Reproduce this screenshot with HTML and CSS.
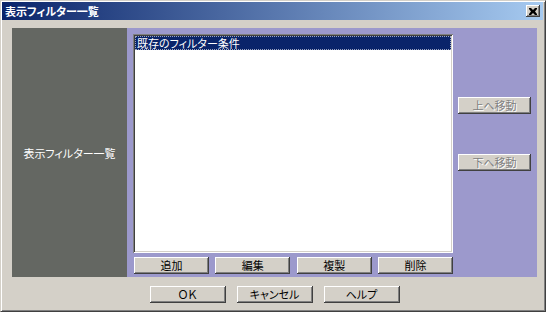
FILE: index.html
```html
<!DOCTYPE html>
<html lang="ja">
<head>
<meta charset="utf-8">
<link rel="stylesheet" href="styles.css">
</head>
<body>
<div class="window">
  <div class="titlebar">
    <span class="title">表示フィルター一覧</span>
    <span class="close"><svg width="8" height="7" viewBox="0 0 8 7"><path d="M0 0h2l2 2 2-2h2v1L6 3.5 8 6v1H6L4 5 2 7H0V6l2-2.5L0 1z" fill="#000"/></svg></span>
  </div>
  <div class="content">
    <div class="panel">
      <div class="side"><span>表示フィルター一覧</span></div>
      <div class="main">
        <div class="listcol">
          <div class="listbox">
            <div class="item selected">既存のフィルター条件</div>
          </div>
          <div class="listbtns">
            <button class="btn">追加</button>
            <button class="btn">編集</button>
            <button class="btn">複製</button>
            <button class="btn">削除</button>
          </div>
        </div>
        <div class="movecol">
          <button class="btn move disabled">上へ移動</button>
          <button class="btn move disabled">下へ移動</button>
        </div>
      </div>
    </div>
    <div class="footer">
      <button class="btn foot">ＯＫ</button>
      <button class="btn foot">キャンセル</button>
      <button class="btn foot">ヘルプ</button>
    </div>
  </div>
</div>
</body>
</html>
```
FILE: styles.css
```css
* { box-sizing: border-box; }
html, body { margin: 0; padding: 0; background: #ffffff; }
body {
  font-family: "Noto Sans CJK JP", "Noto Sans", sans-serif;
  font-size: 11px;
  font-feature-settings: "palt";
  width: 549px;
  height: 316px;
  overflow: hidden;
}
.window {
  width: 546px;
  height: 312px;
  background: #d4d0c8;
  border: 1px solid;
  border-color: #d4d0c8 #404040 #404040 #d4d0c8;
  box-shadow: inset 1px 1px #ffffff, inset -1px -1px #808080;
  padding: 1px 2px 2px 1px;
  display: flex;
  flex-direction: column;
}
.titlebar {
  height: 18px;
  background: linear-gradient(to right, #0a246a, #a6caf0);
  display: flex;
  align-items: center;
  justify-content: space-between;
  padding: 0 3px 0 3px;
}
.title {
  color: #ffffff;
  font-weight: bold;
  font-size: 11px;
  line-height: 18px;
}
.close {
  width: 14px;
  height: 12px;
  background: #d4d0c8;
  box-shadow: inset -1px -1px #404040, inset 1px 1px #ffffff, inset -2px -2px #808080;
  display: flex;
  align-items: center;
  justify-content: center;
}
.close svg { display: block; }
.content {
  flex: 1;
  padding: 8px 6px 0 10px;
  display: flex;
  flex-direction: column;
}
.panel {
  height: 249px;
  display: flex;
}
.side {
  width: 115px;
  background: #646762;
  color: #ffffff;
  display: flex;
  align-items: center;
  justify-content: center;
}
.main {
  flex: 1;
  background: #9c99cc;
  display: flex;
  padding: 6px 6px 3px 6px;
  gap: 5px;
}
.listcol {
  width: 320px;
  display: flex;
  flex-direction: column;
  gap: 4px;
}
.listbox {
  height: 220px;
  background: #ffffff;
  box-shadow: inset 1px 1px #808080, inset -1px -1px #ffffff, inset 2px 2px #404040, inset -2px -2px #d4d0c8;
  padding: 2px;
}
.item {
  height: 14px;
  line-height: 14px;
  padding-left: 2px;
}
.item.selected {
  background: #0a246a;
  color: #ffffff;
  outline: 1px dotted #9aa3c0;
  outline-offset: -1px;
}
.listbtns {
  display: flex;
  justify-content: space-between;
  padding-left: 1px;
}
.btn {
  font-family: inherit;
  font-size: 11px;
  font-feature-settings: "palt";
  background: #d4d0c8;
  color: #000000;
  border: none;
  margin: 0;
  padding: 0;
  height: 17px;
  line-height: 17px;
  box-shadow: inset -1px -1px #404040, inset 1px 1px #ffffff, inset -2px -2px #808080;
}
.listbtns .btn { width: 75px; }
.movecol {
  width: 73px;
  display: flex;
  flex-direction: column;
  padding-top: 63px;
  gap: 40px;
}
.move { width: 73px; }
.disabled {
  color: #808080;
  text-shadow: 1px 1px #ffffff;
}
.footer {
  display: flex;
  justify-content: center;
  gap: 11px;
  padding-top: 9px;
}
.foot { width: 76px; }
```
